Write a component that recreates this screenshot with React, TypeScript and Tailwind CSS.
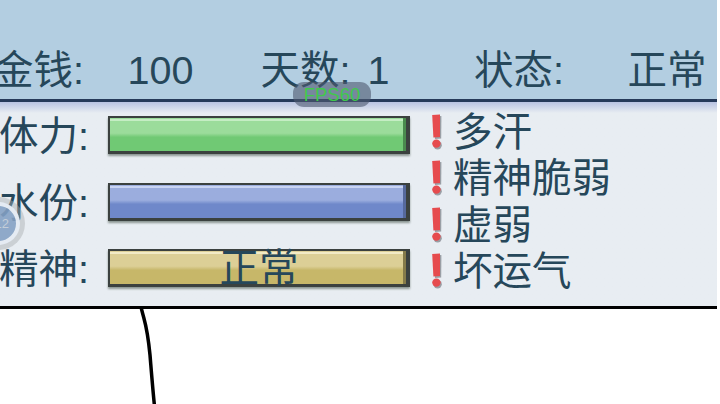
const bars = [
  {
    label: "体力:",
    text: "",
    fill: "bg-linear-to-b from-[#9bdc9b] from-46% to-[#70c974] to-58%",
    shine: "bg-[#c5edc4]",
    cap: "bg-[#4a8a4e]",
  },
  {
    label: "水份:",
    text: "",
    fill: "bg-linear-to-b from-[#9badde] from-46% to-[#6f88ca] to-58%",
    shine: "bg-[#c9d4f3]",
    cap: "bg-[#56699c]",
  },
  {
    label: "精神:",
    text: "正常",
    fill: "bg-linear-to-b from-[#dccf96] from-46% to-[#c7b769] to-58%",
    shine: "bg-[#f2ebc6]",
    cap: "bg-[#857b4a]",
  },
];

const effects = ["多汗", "精神脆弱", "虚弱", "坏运气"];

function Exclamation() {
  return (
    <svg className="mt-px h-[38px] w-[14px] shrink-0" viewBox="0 0 14 38">
      <g fill="#5b6068" opacity="0.55">
        <path d="M3.500 3.500 11.400 3 11.200 25.500 5 26Z" />
        <circle cx="7.600" cy="32.300" r="4.200" />
      </g>
      <g fill="#e64b4e">
        <path d="M2.200 2 10 1.500 10 24 3.400 24.500Z" />
        <circle cx="6.400" cy="30.600" r="4.200" />
      </g>
    </svg>
  );
}

function Bar({ bar }: { bar: (typeof bars)[number] }) {
  return (
    <div className="flex h-[66.7px] items-start">
      <div className="w-[109px] shrink-0 leading-[40px]">{bar.label}</div>
      <div className="relative h-[38px] w-[302px] border-2 border-r-4 border-b-3 border-[#3b413f] shadow-[0_2px_2px_#8b9692]">
        <div className={`flex h-full justify-between ${bar.fill}`}>
          <div className={`mt-px h-[2px] grow ${bar.shine}`}></div>
          <div className={`w-[3px] ${bar.cap}`}></div>
        </div>
        <div className="absolute inset-x-0 top-[-3px] pl-[2px] text-center leading-[40px]">{bar.text}</div>
      </div>
    </div>
  );
}

export default function App() {
  return (
    <div className="relative h-[404px] w-[720px] overflow-hidden bg-white font-['Liberation_Sans','Noto_Sans_CJK_SC',sans-serif] text-[39.500px] whitespace-nowrap text-[#26475a]">
      <div className="flex h-[102px] w-[717px] items-end border-b-3 border-[#263a5a] bg-[#b3cee1] pb-[9px] leading-[40px]">
        <div className="ml-[-6px] w-[133.500px] shrink-0">金钱:</div>
        <div className="w-[133px] shrink-0">100</div>
        <div className="flex w-[213.500px] shrink-0 gap-[17px]">
          <span>天数:</span>
          <span>1</span>
        </div>
        <div className="w-[153.500px] shrink-0">状态:</div>
        <div className="shrink-0">正常</div>
      </div>
      <div className="h-[206.500px] w-[717px] overflow-hidden border-b-3 border-black bg-[#e8edf2] bg-linear-to-b from-[#b9c3e2] to-[#e8edf2] to-[11px]">
        <div className="flex">
          <div className="-ml-px w-[431px] shrink-0 pt-[14px]">
            {bars.map((bar) => (
              <Bar key={bar.label} bar={bar} />
            ))}
          </div>
          <div className="pt-[9.600px]">
            {effects.map((effect) => (
              <div key={effect} className="flex h-[46.600px] items-start gap-[9px] leading-[40px]">
                <Exclamation />
                <div>{effect}</div>
              </div>
            ))}
          </div>
        </div>
      </div>
      <svg className="block h-[95px] w-[720px]" viewBox="0 309 720 95">
        <path d="M141 307C145 324 147 324 150 355C151.500 373 153 392 154.500 406" fill="none" stroke="#000" strokeWidth="3.500" />
      </svg>
      <div className="absolute top-[82px] left-[293px] h-[25px] w-[78px] rounded-[11px] bg-[#4f5a70]/60 text-center text-[18.500px] leading-[26px] text-[#3fc94c]">
        FPS60
      </div>
      <div className="absolute top-[197px] left-[-28px] h-[53px] w-[53px] rounded-full bg-[#a9adb0]/45 p-[5px]">
        <div className="flex h-full w-full items-center justify-end rounded-full border-4 border-[#eef3f7]/90 bg-[#7f9fc6]/80 pr-[7px] text-[13px] text-[#c3cdd8]">
          12
        </div>
      </div>
    </div>
  );
}
